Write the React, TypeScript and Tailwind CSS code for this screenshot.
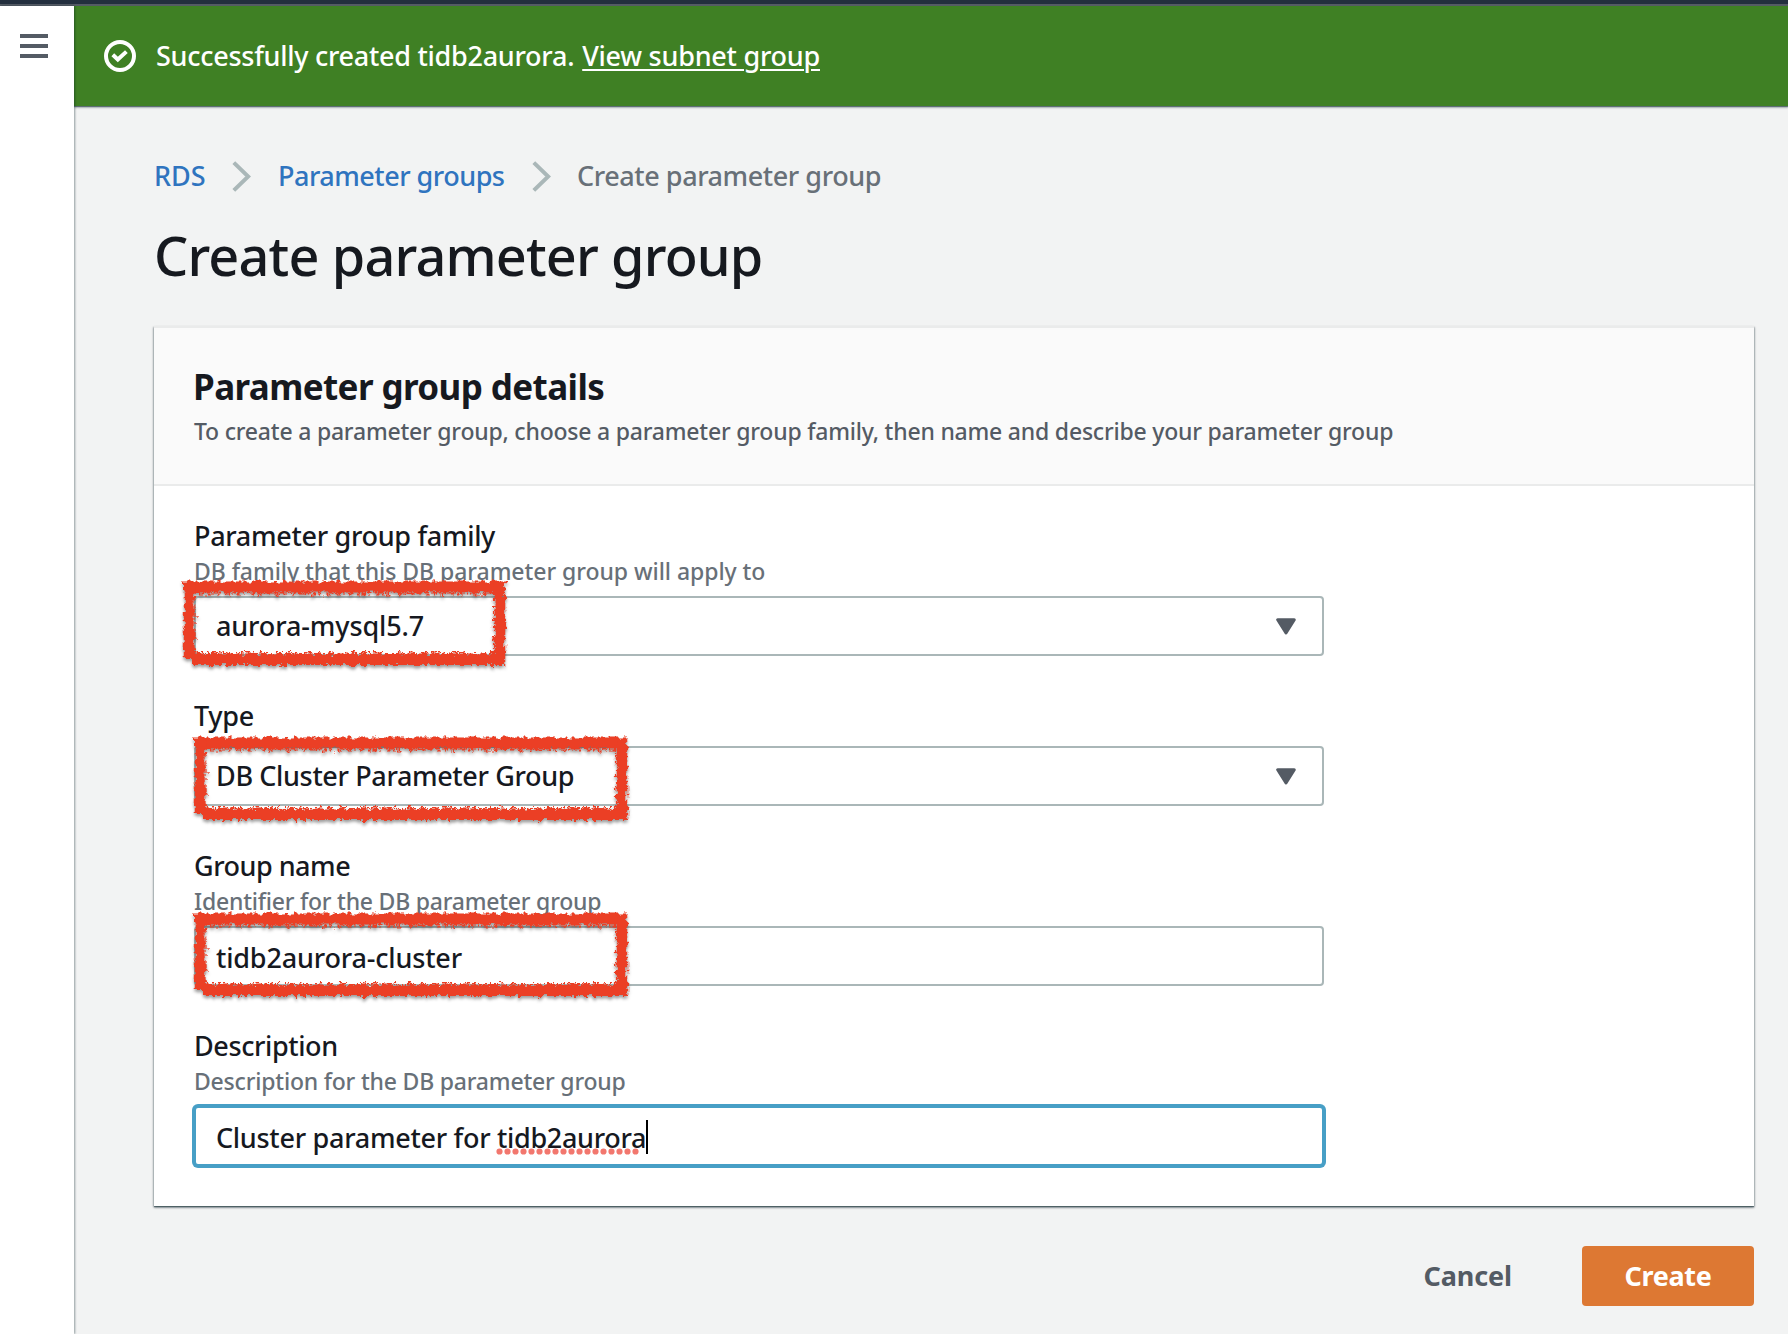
import type { ReactNode } from "react";

const frameLayouts = {
  family: { w: 324, h: 86, place: "-left-[14px] -top-[18px]" },
  type: { w: 435, h: 85, place: "-left-[3px] -top-[12px]" },
  name: { w: 435, h: 85, place: "-left-[3px] -top-[16px]" },
};

type FrameName = keyof typeof frameLayouts;

/** Hand-drawn red marker rectangle laid over a form control. */
function MarkerFrame({ name }: { name: FrameName }) {
  const { w, h, place } = frameLayouts[name];
  const id = `chalk-${name}`;
  return (
    <svg
      className={`pointer-events-none absolute z-10 overflow-visible ${place}`}
      width={w}
      height={h}
      viewBox={`0 0 ${w} ${h}`}
      fill="none"
      aria-hidden="true"
    >
      <defs>
        <filter id={id} filterUnits="userSpaceOnUse" x="-12" y="-12" width={w + 24} height={h + 24} colorInterpolationFilters="sRGB">
          <feTurbulence type="fractalNoise" baseFrequency="0.2" numOctaves="3" seed="4" result="noise" />
          <feDisplacementMap in="SourceGraphic" in2="noise" scale="8" xChannelSelector="R" yChannelSelector="G" result="rough" />
          <feDropShadow in="rough" dx="0" dy="2.5" stdDeviation="1.8" floodColor="#000" floodOpacity="0.38" />
        </filter>
      </defs>
      <g filter={`url(#${id})`} stroke="#eb3f25">
        <path d={`M1 7H${w - 1}`} strokeWidth="11" />
        <path d={`M7 2V${h - 8}`} strokeWidth="10.5" />
        <path d={`M${w - 6} 2V${h - 1}`} strokeWidth="10.5" />
        <path d={`M10 ${h - 6.5}H${w - 1}`} strokeWidth="11" />
        <path d={`M4 13.7H${w - 10}`} strokeWidth="1.6" strokeDasharray="5 2 2 3 7 2 3 1" />
        <path d={`M13 ${h - 13.2}H${w - 12}`} strokeWidth="1.6" strokeDasharray="3 2 6 2 2 3 4 1" />
        <path d={`M${w - 12.4} 12V${h - 12}`} strokeWidth="1.4" strokeDasharray="3 2 5 3" />
        <path d={`M13 12V${h - 14}`} strokeWidth="1.2" strokeDasharray="3 4 5 3" />
      </g>
    </svg>
  );
}

function Caret() {
  return (
    <svg className="mr-[26px] shrink-0" width="20" height="17" viewBox="0 0 20 17" aria-hidden="true">
      <path d="M1.7 1.7H18.3L10 15Z" fill="#545b64" stroke="#545b64" strokeWidth="3" strokeLinejoin="round" />
    </svg>
  );
}

function Separator() {
  return (
    <svg width="19" height="31" viewBox="0 0 19 31" fill="none" aria-hidden="true">
      <path d="M1.8 1.6L16.2 15.5L1.8 29.4" stroke="#aab7b8" strokeWidth="4" />
    </svg>
  );
}

function Field({ label, hint, children }: { label: ReactNode; hint?: ReactNode; children: ReactNode }) {
  return (
    <div>
      <div className="pt-px text-[27px] leading-8 whitespace-nowrap">{label}</div>
      {hint ? (
        <div className="mt-[5px] mb-[11px] text-[23px] leading-7 whitespace-nowrap text-[#687078]">{hint}</div>
      ) : (
        <div className="h-3.5" />
      )}
      {children}
    </div>
  );
}

const control =
  "relative flex h-[60px] w-[1130px] items-center justify-between rounded-[4px] border-2 bg-white pl-5 text-[27px] leading-8 whitespace-nowrap";

export default function App() {
  return (
    <div className="flex h-[1334px] w-[1788px] flex-col overflow-hidden bg-[#f2f3f3] font-['Noto_Sans',sans-serif] font-medium text-[#16191f]">
      <div className="h-1.5 shrink-0 border-b-2 border-[#545b64] bg-[#232f3e]" />
      <div className="flex min-h-0 flex-1">
        <aside className="z-10 flex w-[74px] shrink-0 flex-col bg-white pt-7 pl-5 shadow-[1px_0_2px_rgba(0,28,36,0.4)]">
          <button className="flex w-7 flex-col gap-1.5" aria-label="Open navigation">
            <span className="h-1 w-full bg-[#545b64]" />
            <span className="h-1 w-full bg-[#545b64]" />
            <span className="h-1 w-full bg-[#545b64]" />
          </button>
        </aside>

        <main className="flex min-w-0 flex-1 flex-col">
          <div className="flex h-[100px] shrink-0 items-center bg-[#3f8024] pl-[30px] text-[27px] leading-9 whitespace-nowrap text-white shadow-[0_1px_1px_rgba(0,28,36,0.5),0_2px_2px_rgba(0,28,36,0.25)]">
            <svg width="32" height="32" viewBox="0 0 32 32" fill="none" stroke="#fff" strokeWidth="4" aria-hidden="true">
              <circle cx="16" cy="16" r="14" />
              <path d="M8.8 14.8L13.8 19.5L22.4 11.6" />
            </svg>
            <p className="-mt-px ml-5">
              <span className="tracking-[-0.27px]">Successfully created tidb2aurora.</span>
              <a className="ml-2 tracking-[-0.25px] underline decoration-2 underline-offset-[3px]">View subnet group</a>
            </p>
          </div>

          <div className="flex flex-col pr-[34px] pl-20">
            <nav className="mt-[52px] flex h-9 items-center text-[27px] leading-9 whitespace-nowrap text-[#2f74bf]">
              <a className="w-[78px]">RDS</a>
              <Separator />
              <a className="ml-[27px] w-[254px] tracking-[-0.5px]">Parameter groups</a>
              <Separator />
              <span className="ml-[26px] tracking-[-0.43px] text-[#687078]">Create parameter group</span>
            </nav>
            <h1 className="mt-[29px] text-[54px] leading-[64px] tracking-[-0.84px] whitespace-nowrap">Create parameter group</h1>

            <section className="mt-[39px] bg-white shadow-[0_1px_1px_rgba(0,28,36,0.4),0_2px_2px_rgba(0,28,36,0.3),1px_1px_2px_rgba(0,28,36,0.2),-1px_1px_2px_rgba(0,28,36,0.2)]">
              <header className="h-40 border-y-2 border-[#eaebeb] bg-[#fafafa] pt-[37px] pl-10 whitespace-nowrap">
                <h2 className="-ml-px text-[35px] leading-[44px] font-bold tracking-[-0.6px]">Parameter group details</h2>
                <p className="mt-2 text-[23px] leading-7 tracking-[-0.21px] text-[#545b64]">
                  To create a parameter group, choose a parameter group family, then name and describe your parameter group
                </p>
              </header>

              <div className="flex flex-col gap-[43px] px-10 pt-[33px] pb-10">
                <Field
                  label={<span className="tracking-[-0.31px]">Parameter group family</span>}
                  hint={<span className="tracking-[-0.05px]">DB family that this DB parameter group will apply to</span>}
                >
                  <div className={`${control} border-[#aab7b8]`}>
                    <span className="-mt-px tracking-[-0.13px]">aurora-mysql5.7</span>
                    <Caret />
                    <MarkerFrame name="family" />
                  </div>
                </Field>

                <Field label={<span className="tracking-[-0.27px]">Type</span>}>
                  <div className={`${control} border-[#aab7b8]`}>
                    <span className="-mt-px tracking-[-0.36px]">DB Cluster Parameter Group</span>
                    <Caret />
                    <MarkerFrame name="type" />
                  </div>
                </Field>

                <Field
                  label={<span className="tracking-[-0.5px]">Group name</span>}
                  hint={<span className="tracking-[-0.22px]">Identifier for the DB parameter group</span>}
                >
                  <div className={`${control} border-[#aab7b8]`}>
                    <span className="mt-[3px] tracking-[-0.17px]">tidb2aurora-cluster</span>
                    <MarkerFrame name="name" />
                  </div>
                </Field>

                <Field
                  label={<span className="tracking-[-0.4px]">Description</span>}
                  hint={<span className="tracking-[-0.2px]">Description for the DB parameter group</span>}
                >
                  <div className={`${control} border-[#479fc6] shadow-[0_0_0_2px_#479fc6]`}>
                    <span className="mt-[3px] flex items-center">
                      <span className="tracking-[-0.28px] whitespace-pre">Cluster parameter for </span>
                      <span className="relative tracking-[-0.33px]">
                        tidb2aurora
                        <svg className="absolute top-[26px] -left-px" width="144" height="7" viewBox="0 0 144 7" aria-hidden="true">
                          <path d="M3.5 3.5H142" stroke="#f0645a" strokeOpacity="0.88" strokeWidth="6.2" strokeLinecap="round" strokeDasharray="0 8" />
                        </svg>
                      </span>
                      <span className="-mt-0.5 h-[34px] w-0.5 bg-black" />
                    </span>
                  </div>
                </Field>
              </div>
            </section>

            <footer className="mt-10 flex h-[60px] items-center justify-end text-[27px] leading-8 font-bold">
              <button className="mr-[70px] tracking-[-0.1px] text-[#545b64]">Cancel</button>
              <button className="h-[60px] w-[172px] rounded-[4px] bg-[#dd7833] tracking-[-0.3px] text-white">Create</button>
            </footer>
          </div>
        </main>
      </div>
    </div>
  );
}
